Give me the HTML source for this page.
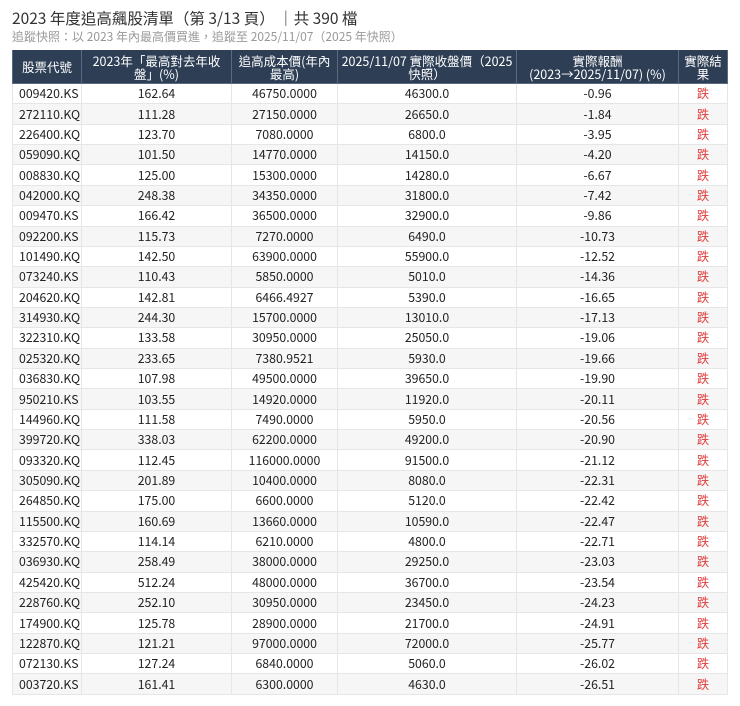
<!DOCTYPE html>
<html><head><meta charset="utf-8"><style>
body{margin:0;background:#fff;font-family:"Liberation Sans","Noto Sans CJK TC",sans-serif;color:#222;}
.t1{position:absolute;left:12px;top:8px;font-size:15.5px;color:#333;font-family:"Noto Sans CJK TC",sans-serif;line-height:20px}
.t2{position:absolute;left:12px;top:29px;font-size:12px;color:#999;font-family:"Noto Sans CJK TC",sans-serif;line-height:16px}
table{position:absolute;left:12px;top:50px;width:715px;border-collapse:collapse;table-layout:fixed;font-family:"Noto Sans CJK TC",sans-serif;font-size:12px}
th{background:#2d3e55;color:#fff;font-weight:normal;height:33px;line-height:13px;padding:0 3px;border:1px solid #5a6a80;border-top:none;font-size:12.5px}
td{height:19.37px;padding:0 3px;border:1px solid #e6e6e6;text-align:center;line-height:19px;font-size:12.3px}
td:first-child{text-align:left;padding-left:6px}
tr:nth-child(even) td{background:#f6f6f6}
td.r{color:#e03c3c}
</style></head><body>
<div class="t1">2023 年度追高飆股清單（第 3/13 頁） ｜共 390 檔</div>
<div class="t2">追蹤快照：以 2023 年內最高價買進，追蹤至 2025/11/07（2025 年快照）</div>
<table>
<colgroup><col style="width:69px"><col style="width:150px"><col style="width:106px"><col style="width:179px"><col style="width:162px"><col style="width:49px"></colgroup>
<thead><tr><th>股票代號</th><th>2023年「最高對去年收<br>盤」(%)</th><th>追高成本價(年內<br>最高)</th><th>2025/11/07 實際收盤價（2025<br>快照）</th><th>實際報酬<br>(2023→2025/11/07) (%)</th><th>實際結<br>果</th></tr></thead>
<tbody>
<tr><td>009420.KS</td><td>162.64</td><td>46750.0000</td><td>46300.0</td><td>-0.96</td><td class="r">跌</td></tr>
<tr><td>272110.KQ</td><td>111.28</td><td>27150.0000</td><td>26650.0</td><td>-1.84</td><td class="r">跌</td></tr>
<tr><td>226400.KQ</td><td>123.70</td><td>7080.0000</td><td>6800.0</td><td>-3.95</td><td class="r">跌</td></tr>
<tr><td>059090.KQ</td><td>101.50</td><td>14770.0000</td><td>14150.0</td><td>-4.20</td><td class="r">跌</td></tr>
<tr><td>008830.KQ</td><td>125.00</td><td>15300.0000</td><td>14280.0</td><td>-6.67</td><td class="r">跌</td></tr>
<tr><td>042000.KQ</td><td>248.38</td><td>34350.0000</td><td>31800.0</td><td>-7.42</td><td class="r">跌</td></tr>
<tr><td>009470.KS</td><td>166.42</td><td>36500.0000</td><td>32900.0</td><td>-9.86</td><td class="r">跌</td></tr>
<tr><td>092200.KS</td><td>115.73</td><td>7270.0000</td><td>6490.0</td><td>-10.73</td><td class="r">跌</td></tr>
<tr><td>101490.KQ</td><td>142.50</td><td>63900.0000</td><td>55900.0</td><td>-12.52</td><td class="r">跌</td></tr>
<tr><td>073240.KS</td><td>110.43</td><td>5850.0000</td><td>5010.0</td><td>-14.36</td><td class="r">跌</td></tr>
<tr><td>204620.KQ</td><td>142.81</td><td>6466.4927</td><td>5390.0</td><td>-16.65</td><td class="r">跌</td></tr>
<tr><td>314930.KQ</td><td>244.30</td><td>15700.0000</td><td>13010.0</td><td>-17.13</td><td class="r">跌</td></tr>
<tr><td>322310.KQ</td><td>133.58</td><td>30950.0000</td><td>25050.0</td><td>-19.06</td><td class="r">跌</td></tr>
<tr><td>025320.KQ</td><td>233.65</td><td>7380.9521</td><td>5930.0</td><td>-19.66</td><td class="r">跌</td></tr>
<tr><td>036830.KQ</td><td>107.98</td><td>49500.0000</td><td>39650.0</td><td>-19.90</td><td class="r">跌</td></tr>
<tr><td>950210.KS</td><td>103.55</td><td>14920.0000</td><td>11920.0</td><td>-20.11</td><td class="r">跌</td></tr>
<tr><td>144960.KQ</td><td>111.58</td><td>7490.0000</td><td>5950.0</td><td>-20.56</td><td class="r">跌</td></tr>
<tr><td>399720.KQ</td><td>338.03</td><td>62200.0000</td><td>49200.0</td><td>-20.90</td><td class="r">跌</td></tr>
<tr><td>093320.KQ</td><td>112.45</td><td>116000.0000</td><td>91500.0</td><td>-21.12</td><td class="r">跌</td></tr>
<tr><td>305090.KQ</td><td>201.89</td><td>10400.0000</td><td>8080.0</td><td>-22.31</td><td class="r">跌</td></tr>
<tr><td>264850.KQ</td><td>175.00</td><td>6600.0000</td><td>5120.0</td><td>-22.42</td><td class="r">跌</td></tr>
<tr><td>115500.KQ</td><td>160.69</td><td>13660.0000</td><td>10590.0</td><td>-22.47</td><td class="r">跌</td></tr>
<tr><td>332570.KQ</td><td>114.14</td><td>6210.0000</td><td>4800.0</td><td>-22.71</td><td class="r">跌</td></tr>
<tr><td>036930.KQ</td><td>258.49</td><td>38000.0000</td><td>29250.0</td><td>-23.03</td><td class="r">跌</td></tr>
<tr><td>425420.KQ</td><td>512.24</td><td>48000.0000</td><td>36700.0</td><td>-23.54</td><td class="r">跌</td></tr>
<tr><td>228760.KQ</td><td>252.10</td><td>30950.0000</td><td>23450.0</td><td>-24.23</td><td class="r">跌</td></tr>
<tr><td>174900.KQ</td><td>125.78</td><td>28900.0000</td><td>21700.0</td><td>-24.91</td><td class="r">跌</td></tr>
<tr><td>122870.KQ</td><td>121.21</td><td>97000.0000</td><td>72000.0</td><td>-25.77</td><td class="r">跌</td></tr>
<tr><td>072130.KS</td><td>127.24</td><td>6840.0000</td><td>5060.0</td><td>-26.02</td><td class="r">跌</td></tr>
<tr><td>003720.KS</td><td>161.41</td><td>6300.0000</td><td>4630.0</td><td>-26.51</td><td class="r">跌</td></tr>
</tbody></table>
</body></html>
